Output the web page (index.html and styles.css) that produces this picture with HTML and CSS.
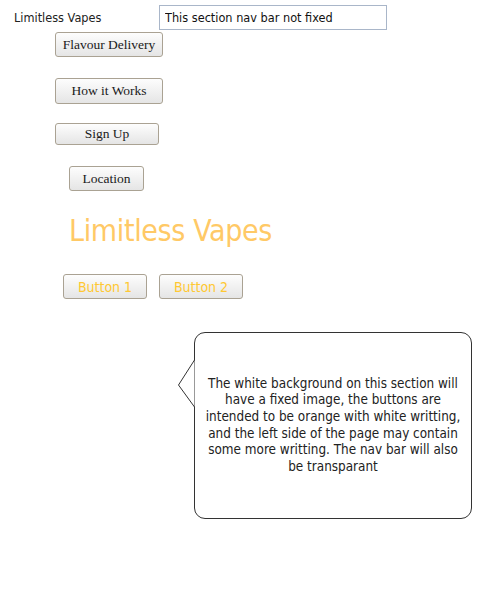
FILE: index.html
```html
<!DOCTYPE html>
<html>
<head>
<meta charset="utf-8">
<link rel="stylesheet" href="styles.css">
</head>
<body>
<header class="topbar">
  <span class="brand">Limitless Vapes</span>
  <input class="note-input" type="text" value="This section nav bar not fixed">
</header>
<nav class="nav">
  <button class="nav-btn btn-flavour">Flavour Delivery</button>
  <button class="nav-btn btn-how">How it Works</button>
  <button class="nav-btn btn-sign">Sign Up</button>
  <button class="nav-btn btn-loc">Location</button>
</nav>
<section class="hero">
  <h1 class="hero-title">Limitless Vapes</h1>
  <div class="hero-actions">
    <button class="hero-btn">Button 1</button>
    <button class="hero-btn">Button 2</button>
  </div>
</section>
<div class="callout-wrap">
  <div class="callout">
    <svg class="callout-tail" width="20" height="52" viewBox="0 0 20 52">
      <polyline points="17.5,0 17.5,1 1.5,26 17.5,48 17.5,52" fill="#fff" stroke="#333" stroke-width="1"/>
    </svg>
    <p class="callout-text">The white background on this section will have a fixed image, the buttons are intended to be orange with white writting, and the left side of the page may contain some more writting. The nav bar will also be transparant</p>
  </div>
</div>
</body>
</html>
```

FILE: styles.css
```css
html, body {
  margin: 0;
  padding: 0;
  background: #fff;
}
body {
  font-family: "DejaVu Sans Condensed", "DejaVu Sans", sans-serif;
  color: #222;
}
.topbar {
  display: flex;
  align-items: center;
  padding-top: 5px;
}
.brand {
  width: 145px;
  padding-left: 14px;
  font-size: 12.6px;
  color: #222;
}
.note-input {
  box-sizing: border-box;
  width: 228px;
  height: 25px;
  margin: 0;
  padding: 0 5px;
  border: 1px solid #a9b6c9;
  font-family: "DejaVu Sans Condensed", "DejaVu Sans", sans-serif;
  font-size: 12.6px;
  color: #111;
  background: #fff;
  outline: none;
}
.nav {
  display: flex;
  flex-direction: column;
  align-items: flex-start;
  padding-top: 2px;
}
.nav-btn, .hero-btn {
  box-sizing: border-box;
  margin: 0;
  padding: 0;
  border: 1px solid #aaa293;
  border-radius: 3px;
  background: linear-gradient(#fdfdfd, #e5e5e5);
}
.nav-btn {
  font-family: "Liberation Serif", serif;
  font-size: 13.5px;
  color: #1a1a1a;
  margin-left: 55px;
}
.btn-flavour { width: 108px; height: 25px; }
.btn-how { width: 108px; height: 26px; margin-top: 21px; }
.btn-sign { width: 104px; height: 22px; margin-top: 19px; }
.btn-loc { width: 75px; height: 25px; margin-top: 21px; margin-left: 69px; }
.hero {
  padding-left: 69px;
}
.hero-title {
  margin: 20px 0 0;
  font-size: 30px;
  letter-spacing: -0.35px;
  font-weight: normal;
  line-height: 40px;
  color: #ffc966;
}
.hero-actions {
  display: flex;
  gap: 12px;
  margin-top: 23px;
  margin-left: -6px;
}
.hero-btn {
  width: 84px;
  height: 25px;
  font-family: "DejaVu Sans Condensed", "DejaVu Sans", sans-serif;
  font-size: 14px;
  color: #ffc832;
}
.callout-wrap {
  padding: 33px 0 0 194px;
}
.callout {
  position: relative;
  box-sizing: border-box;
  width: 278px;
  height: 187px;
  border: 1px solid #333;
  border-radius: 11px;
  display: flex;
  align-items: center;
  justify-content: center;
  padding: 0 6px;
}
.callout-tail {
  position: absolute;
  left: -18px;
  top: 26px;
}
.callout-text {
  margin: 0;
  text-align: center;
  font-size: 13.4px;
  line-height: 16.6px;
  color: #222;
}
```
